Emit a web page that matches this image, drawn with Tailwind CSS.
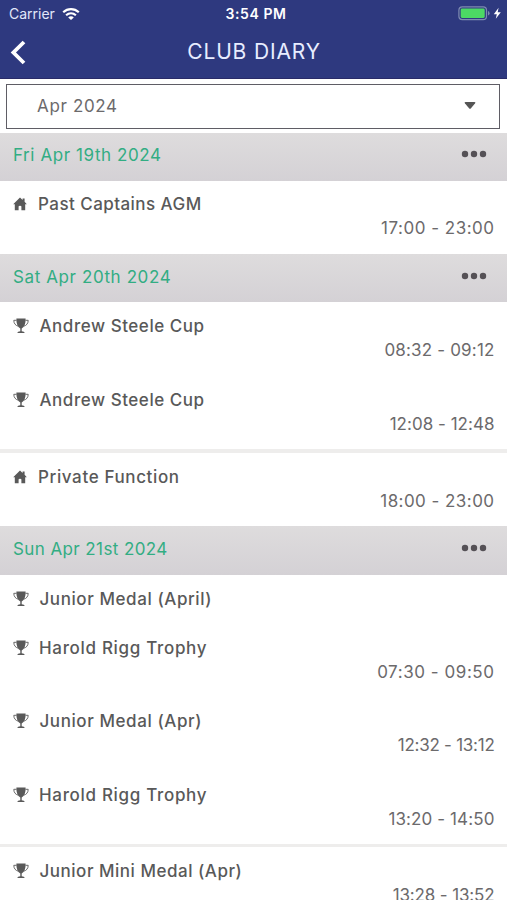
<!DOCTYPE html>
<html lang="en">
<head>
<meta charset="utf-8">
<title>Club Diary</title>
<script src="https://cdn.jsdelivr.net/npm/@tailwindcss/browser@4"></script>
</head>
<body class="h-[900px] overflow-hidden bg-white font-[Inter,sans-serif] text-[17px] leading-6 text-[#595959]">
<svg class="hidden">
  <symbol id="home" viewBox="0 0 14 14"><path d="M7 .5 9.600 2.900V1.500h2v3.300L13.800 7.200H12.200V13.200H8.400V9.400Q8.400 8.700 7 8.700T5.600 9.400V13.200H1.800V7.200H.2Z" fill="currentColor"/></symbol>
  <symbol id="cup" viewBox="0 0 16 16"><path d="M3.400.6h9.200C12.800 5.600 11.500 9 8.700 10.500V13.200Q11.400 13.400 11.800 15H4.200Q4.600 13.400 7.300 13.200V10.500C4.500 9 3.200 5.600 3.400.6Z" fill="currentColor"/><path d="M3.600 2.300H.8C.8 5.600 2.600 7.500 5.200 8.200M12.400 2.300H15.200C15.200 5.600 13.400 7.500 10.800 8.200" fill="none" stroke="currentColor" stroke-width=".9"/></symbol>
  <symbol id="dots" viewBox="0 0 26 8"><g fill="#555156"><circle cx="4" cy="4" r="3.200"/><circle cx="13" cy="4" r="3.200"/><circle cx="22" cy="4" r="3.200"/></g></symbol>
</svg>

<header class="h-[79px] border-b border-[#292b68] bg-[#2e397f] text-white">
  <div class="grid h-[27px] grid-cols-3 items-center pt-px text-[14px] leading-5">
    <div class="flex items-center gap-[7px] pl-[9px] text-[#e2e7fa]">
      <span>Carrier</span>
      <svg class="h-[13px] w-[18px]" viewBox="0 0 18 13" fill="none" stroke="#fff" stroke-width="2.200"><path d="M1.200 4.300C5.700.1 12.300.1 16.800 4.300M4.100 7.300C7 4.700 11 4.700 13.900 7.300"/><path d="M6.200 9.400C7.800 8 10.200 8 11.800 9.400L9 12.100Z" fill="#fff" stroke="none"/></svg>
    </div>
    <div class="pl-[5px] text-center font-semibold tracking-[0.6px]">3:54 PM</div>
    <div class="flex items-center justify-end pr-[5px]">
      <svg class="-mt-px h-[15px] w-[44px]" viewBox="0 0 44 15"><rect x=".9" y=".9" width="27.600" height="12.700" rx="3.400" fill="none" stroke="#7d8bb0" stroke-width="1.200"/><rect x="2.700" y="2.600" width="24" height="9.300" rx="1.400" fill="#4cd964"/><path d="M30 5v4.500q1.600-.6 1.600-2.250T30 5Z" fill="#7d8bb0"/><path d="M40.600 1.800 35.800 8.200H38.800L37.800 12.800 42.800 6.200H39.700Z" fill="#fff"/></svg>
    </div>
  </div>
  <div class="grid h-[50px] grid-cols-[40px_1fr_40px] items-center">
    <svg class="ml-[10px] h-[25px] w-4" viewBox="0 0 16 25"><path d="M14 2 3.400 12.500 14 23" fill="none" stroke="#fff" stroke-width="3.800"/></svg>
    <h1 class="pl-px text-center text-[21px] tracking-[0.85px] text-[#e8edff]">CLUB DIARY</h1>
  </div>
</header>

<div class="h-[53.500px] px-1.5 pt-[5px]">
  <div class="flex h-[45px] w-[493.500px] items-center justify-between border-[1.500px] border-[#5f5d65] pr-[23px] pl-[30px]">
    <span class="-mt-0.5 tracking-[0.65px] text-[#6c6a6c]">Apr 2024</span>
    <svg class="-mt-0.5 h-[7px] w-3" viewBox="0 0 12 7"><path d="M1.500 0h9q1.500 0 .6 1.200L7 6.300q-1 1-2 0L.9 1.200Q0 0 1.500 0Z" fill="#555"/></svg>
  </div>
</div>

<main>
  <section>
    <div class="flex h-[48.300px] items-center justify-between bg-linear-to-b from-[#dedcdd] to-[#d4d1d5] pr-5 pl-[13px] text-[#32ad83]"><h2 class="-mt-1 tracking-[0.58px]">Fri Apr 19th 2024</h2><svg class="-mt-[5px] h-2 w-[26px]"><use href="#dots"/></svg></div>
    <div class="h-[73.400px] pt-[11px]">
      <div class="flex items-center pl-[13px] font-medium"><svg class="mr-[11px] size-[14px]"><use href="#home"/></svg><span class="tracking-[0.45px]">Past Captains AGM</span></div>
      <div class="pr-[12.500px] text-right tracking-[0.5px] text-[#6c6a6c]">17:00 - 23:00</div>
    </div>
  </section>

  <section>
    <div class="flex h-[48.300px] items-center justify-between bg-linear-to-b from-[#dedcdd] to-[#d4d1d5] pr-5 pl-[13px] text-[#32ad83]"><h2 class="-mt-0.5 tracking-[0.6px]">Sat Apr 20th 2024</h2><svg class="-mt-[5px] h-2 w-[26px]"><use href="#dots"/></svg></div>
    <div class="h-[73.400px] pt-3">
      <div class="flex items-center pl-[12.500px] font-medium"><svg class="mr-[11px] size-4"><use href="#cup"/></svg><span class="tracking-[0.54px]">Andrew Steele Cup</span></div>
      <div class="pr-[12.500px] text-right tracking-[0.17px] text-[#6c6a6c]">08:32 - 09:12</div>
    </div>
    <div class="h-[73.400px] pt-3">
      <div class="flex items-center pl-[12.500px] font-medium"><svg class="mr-[11px] size-4"><use href="#cup"/></svg><span class="tracking-[0.54px]">Andrew Steele Cup</span></div>
      <div class="pr-[12.500px] text-right tracking-[0.03px] text-[#6c6a6c]">12:08 - 12:48</div>
    </div>
    <div class="h-[77px] pt-0.5">
      <div class="-mt-0.5 h-[3.500px] bg-[#eeedec]"></div>
      <div class="mt-3 flex items-center pl-[13px] font-medium"><svg class="mr-[11px] size-[14px]"><use href="#home"/></svg><span class="tracking-[0.62px]">Private Function</span></div>
      <div class="pr-[12.500px] text-right tracking-[0.45px] text-[#6c6a6c]">18:00 - 23:00</div>
    </div>
  </section>

  <section>
    <div class="flex h-[48.300px] items-center justify-between bg-linear-to-b from-[#dedcdd] to-[#d4d1d5] pr-5 pl-[13px] text-[#32ad83]"><h2 class="-mt-0.5 tracking-[0.4px]">Sun Apr 21st 2024</h2><svg class="-mt-[5px] h-2 w-[26px]"><use href="#dots"/></svg></div>
    <div class="h-[49.200px] pt-3">
      <div class="flex items-center pl-[12.500px] font-medium"><svg class="mr-[11px] size-4"><use href="#cup"/></svg><span class="tracking-[0.58px]">Junior Medal (April)</span></div>
    </div>
    <div class="h-[73.400px] pt-3">
      <div class="flex items-center pl-[12.500px] font-medium"><svg class="mr-[10.500px] size-4"><use href="#cup"/></svg><span class="tracking-[0.68px]">Harold Rigg Trophy</span></div>
      <div class="pr-[12.500px] text-right tracking-[0.55px] text-[#6c6a6c]">07:30 - 09:50</div>
    </div>
    <div class="h-[73.400px] pt-3">
      <div class="flex items-center pl-[12.500px] font-medium"><svg class="mr-[11px] size-4"><use href="#cup"/></svg><span class="tracking-[0.58px]">Junior Medal (Apr)</span></div>
      <div class="pr-[12.500px] text-right tracking-[-0.25px] text-[#6c6a6c]">12:32 - 13:12</div>
    </div>
    <div class="h-[73.400px] pt-3">
      <div class="flex items-center pl-[12.500px] font-medium"><svg class="mr-[10.500px] size-4"><use href="#cup"/></svg><span class="tracking-[0.68px]">Harold Rigg Trophy</span></div>
      <div class="pr-[12.500px] text-right tracking-[0.11px] text-[#6c6a6c]">13:20 - 14:50</div>
    </div>
    <div class="h-[77px]">
      <div class="h-[3px] bg-[#eeedec]"></div>
      <div class="mt-3 flex items-center pl-[12.500px] font-medium"><svg class="mr-[11px] size-4"><use href="#cup"/></svg><span class="tracking-[0.52px]">Junior Mini Medal (Apr)</span></div>
      <div class="pr-[12.500px] text-right tracking-[-0.14px] text-[#6c6a6c]">13:28 - 13:52</div>
    </div>
  </section>
</main>
</body>
</html>
